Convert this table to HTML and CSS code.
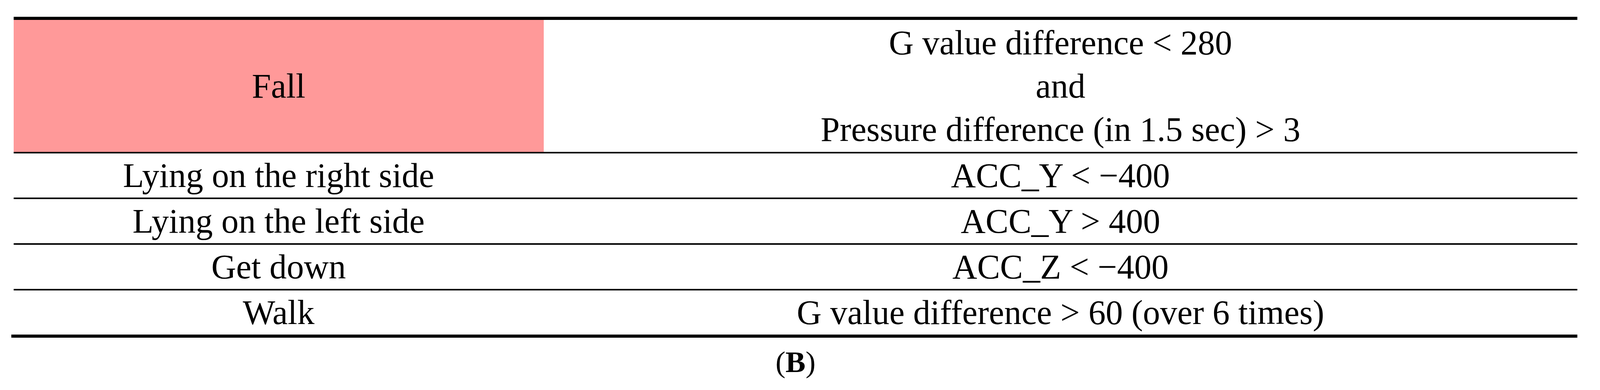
FILE: index.html
```html
<!DOCTYPE html>
<html lang="en">
<head>
<meta charset="utf-8">
<title>Table B</title>
<link rel="stylesheet" href="styles.css">
</head>
<body>
<div class="sheet">
  <div class="table">
    <div class="row fall">
      <div class="cell pink">Fall</div>
      <div class="cell multi">
        <div>G value difference &lt; 280</div>
        <div>and</div>
        <div>Pressure difference (in 1.5 sec) &gt; 3</div>
      </div>
    </div>
    <div class="row">
      <div class="cell">Lying on the right side</div>
      <div class="cell">ACC_Y &lt; &minus;400</div>
    </div>
    <div class="row">
      <div class="cell">Lying on the left side</div>
      <div class="cell">ACC_Y &gt; 400</div>
    </div>
    <div class="row">
      <div class="cell">Get down</div>
      <div class="cell">ACC_Z &lt; &minus;400</div>
    </div>
    <div class="row last">
      <div class="cell">Walk</div>
      <div class="cell">G value difference &gt; 60 (over 6 times)</div>
    </div>
  </div>
  <div class="rule"></div>
  <div class="caption">(<b>B</b>)</div>
</div>
</body>
</html>
```
FILE: styles.css
```css
html, body {
  margin: 0;
  padding: 0;
  background: #ffffff;
  overflow: hidden;
}
body {
  font-family: "Liberation Serif", "Times New Roman", serif;
  color: #000000;
}
.sheet {
  margin-left: 0.8516%;
  width: 97.736%;
  padding-top: 43px;
}
.table {
  border-top: 8px solid #000000;
}
.row {
  display: grid;
  grid-template-columns: 33.89% 1fr;
  height: 113px;
  border-bottom: 4px solid #000000;
}
.row.last {
  border-bottom: none;
}
.row.fall {
  height: 338px;
}
.cell {
  display: flex;
  align-items: center;
  justify-content: center;
  text-align: center;
  font-size: 88px;
  line-height: 113px;
  white-space: nowrap;
  min-width: 0;
}
.cell.pink {
  background: #ff9999;
}
.cell.multi {
  flex-direction: column;
  line-height: 111px;
}
.rule {
  height: 8px;
  margin-left: -6px;
  background: #000000;
}
.caption {
  margin-top: 17px;
  text-align: center;
  font-size: 77px;
  line-height: 90px;
}
.caption b {
  font-weight: bold;
}
```
